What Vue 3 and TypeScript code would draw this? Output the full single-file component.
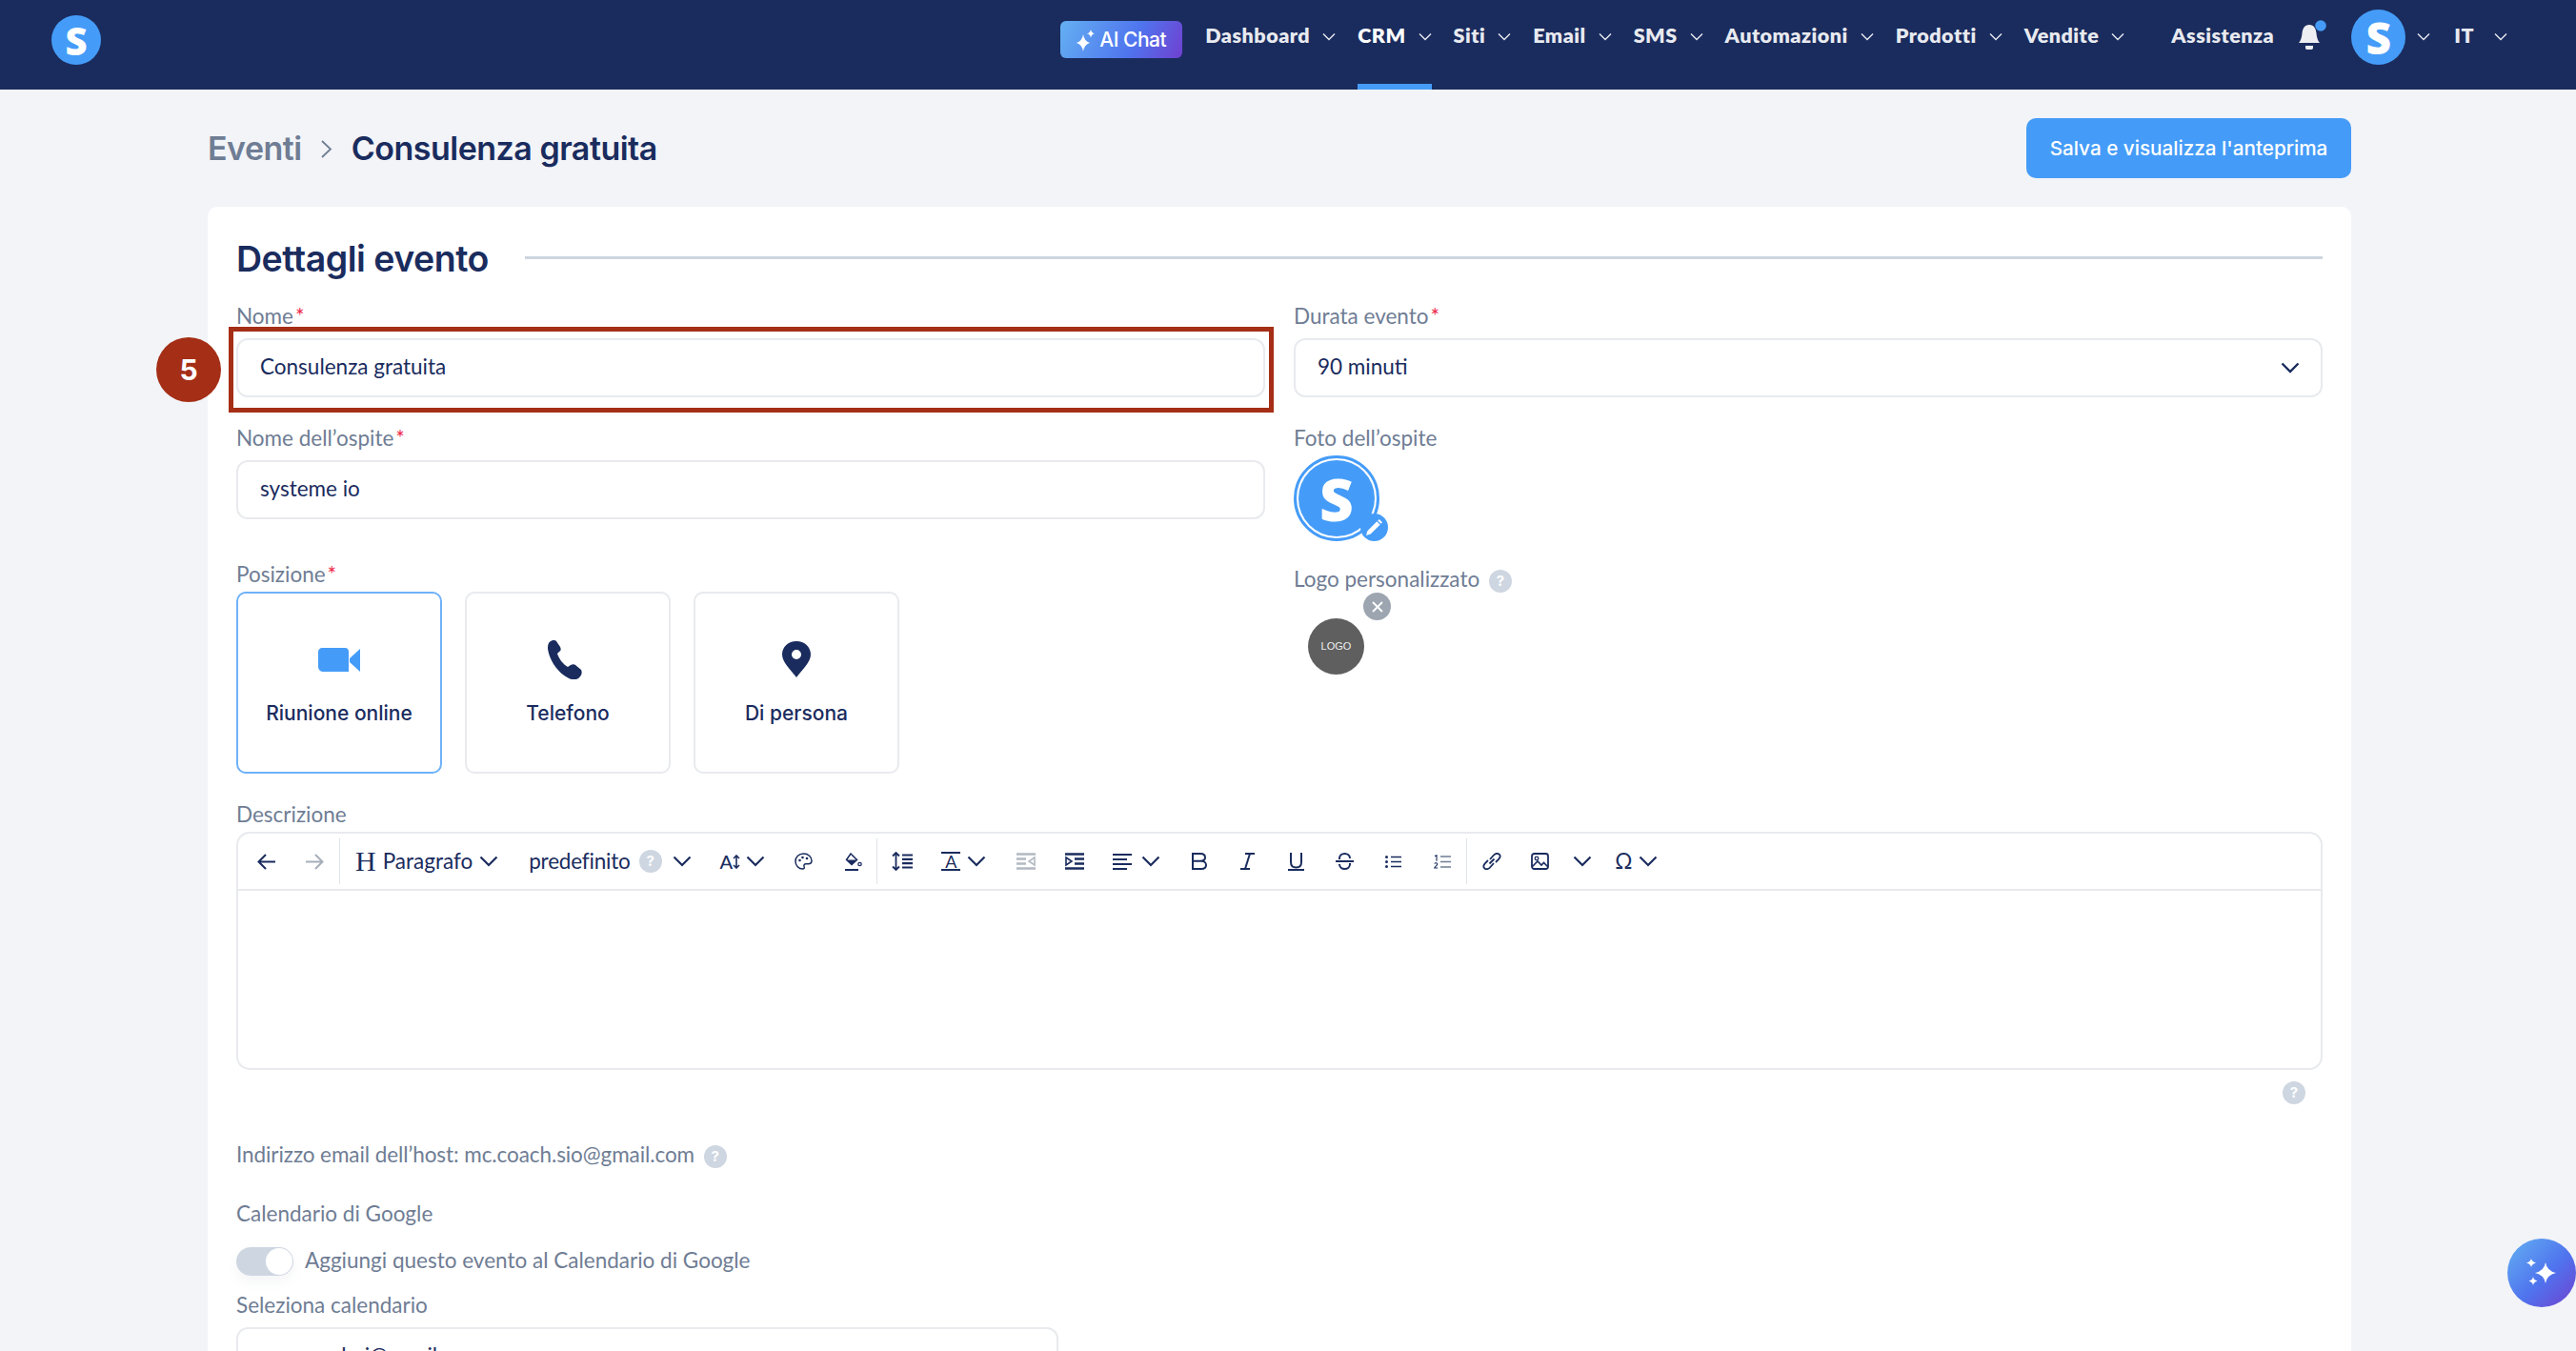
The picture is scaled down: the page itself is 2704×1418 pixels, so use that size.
<script setup lang="ts">
type NavItem = { label: string; active?: boolean }

const navItems: NavItem[] = [
  { label: 'Dashboard' },
  { label: 'CRM', active: true },
  { label: 'Siti' },
  { label: 'Email' },
  { label: 'SMS' },
  { label: 'Automazioni' },
  { label: 'Prodotti' },
  { label: 'Vendite' }
]
</script>

<template>
  <div class="page">
    <header class="topbar">
      <div class="logo"><span>S</span></div>
      <nav class="nav">
        <button class="ai-chat">
          <svg width="20" height="24" viewBox="0 0 20 24"><path fill="#fff" d="M7 6Q8 13 14 15 8 17 7 24 6 17 0 15 6 13 7 6zM15 1Q15.600 4.400 19 5.300 15.600 6.200 15 9.500 14.400 6.200 11 5.300 14.400 4.400 15 1z"/></svg>
          AI Chat
        </button>
        <a v-for="item in navItems" :key="item.label" class="nav-item" :class="{ active: item.active }">
          <span>{{ item.label }}</span>
          <svg class="nav-chev" width="14" height="9" viewBox="0 0 14 9"><path d="M1 1.500l6 6 6-6" fill="none" stroke="#e8eaf0" stroke-width="1.400"/></svg>
        </a>
        <a class="nav-item help-link"><span>Assistenza</span></a>
        <div class="bell">
          <svg width="30" height="34" viewBox="0 0 30 34"><path fill="#eceef2" d="M12 6c-5 0-7 4-7.500 9-.3 4-1.500 8-3.500 10h22c-2-2-3.200-6-3.500-10-.5-5-2.500-9-7.500-9zM8 28h8v2c0 1-.6 2-1.600 2H9.600C8.600 32 8 31 8 30z"/><circle cx="24" cy="7" r="5.800" fill="#459cf8"/></svg>
        </div>
        <div class="avatar"><span>S</span></div>
        <svg class="nav-chev avatar-chev" width="14" height="9" viewBox="0 0 14 9"><path d="M1 1.500l6 6 6-6" fill="none" stroke="#e8eaf0" stroke-width="1.400"/></svg>
        <a class="nav-item lang"><span>IT</span>
          <svg class="nav-chev" width="14" height="9" viewBox="0 0 14 9"><path d="M1 1.500l6 6 6-6" fill="none" stroke="#e8eaf0" stroke-width="1.400"/></svg>
        </a>
      </nav>
    </header>

    <main class="content">
      <div class="page-head">
        <div class="crumbs">
          <span class="crumb-parent">Eventi</span>
          <svg width="14" height="24" viewBox="0 0 14 24"><path d="M2 4l9 8.500-9 8.500" fill="none" stroke="#6f7d94" stroke-width="1.800"/></svg>
          <span class="crumb-current">Consulenza gratuita</span>
        </div>
        <button class="primary">Salva e visualizza l'anteprima</button>
      </div>

      <section class="card">
        <div class="section-title">
          <h2>Dettagli evento</h2>
          <div class="rule"></div>
        </div>

        <div class="columns">
          <div class="col">
            <div class="field field-name">
              <label>Nome<i>*</i></label>
              <div class="input">Consulenza gratuita</div>
              <div class="highlight"></div>
              <div class="step">5</div>
            </div>
            <div class="field">
              <label>Nome dell’ospite<i>*</i></label>
              <div class="input">systeme io</div>
            </div>
            <div class="field field-pos">
              <label>Posizione<i>*</i></label>
              <div class="pos-row">
                <div class="pos selected">
                  <span class="pos-icon"><svg width="44" height="25" viewBox="0 0 44 25"><path fill="#459cf8" d="M4 0h24c3 0 4 2 4 4v21H6c-4 0-6-2-6-6V4c0-2 2-4 4-4zM33 11L44 1v24L33 15z"/></svg></span>
                  <span>Riunione online</span>
                </div>
                <div class="pos">
                  <span class="pos-icon"><svg width="42" height="41" viewBox="0 0 42 41"><path fill="#1a2c5e" d="M1 3c2-3 6-4 8-2l4 6c1 2 1 4-1 5l-2 2c2 6 6 11 11 14l3-2c2-1 4-1 5 0l6 5c1 2 1 5-1 7-2 3-6 4-9 3C13 37 2 23 0 9c0-2 0-4 1-6z"/></svg></span>
                  <span>Telefono</span>
                </div>
                <div class="pos">
                  <span class="pos-icon"><svg width="30" height="38" viewBox="0 0 30 38"><path fill="#1a2c5e" fill-rule="evenodd" d="M15 0c8.500 0 15 6 15 14 0 8-9 16-15 24C9 30 0 22 0 14 0 6 6.500 0 15 0zm0 9a5 5 0 1 0 0 10 5 5 0 0 0 0-10z"/></svg></span>
                  <span>Di persona</span>
                </div>
              </div>
            </div>
          </div>

          <div class="col">
            <div class="field">
              <label>Durata evento<i>*</i></label>
              <div class="input select">
                90 minuti
                <svg width="20" height="12" viewBox="0 0 20 12"><path d="M1.500 1.500L10 10l8.500-8.500" fill="none" stroke="#1a2c5e" stroke-width="2.400"/></svg>
              </div>
            </div>
            <div class="field">
              <label>Foto dell’ospite</label>
              <div class="guest-photo">
                <div class="guest-inner"><span>S</span></div>
                <div class="pencil">
                  <svg width="18" height="18" viewBox="0 0 18 18"><path fill="#fff" d="M0 18l1.500-5L12 2.500l3.500 3.500L5 16.500zM13 1.500L14.500 0 18 3.500 16.500 5z"/></svg>
                </div>
              </div>
            </div>
            <div class="field field-logo">
              <label>Logo personalizzato <span class="help">?</span></label>
              <div class="logo-box">
                <div class="logo-round">LOGO</div>
                <div class="remove">
                  <svg width="12" height="12" viewBox="0 0 12 12"><path d="M1 1l10 10M11 1L1 11" stroke="#fff" stroke-width="1.800"/></svg>
                </div>
              </div>
            </div>
          </div>
        </div>

        <div class="field field-desc">
          <label>Descrizione</label>
          <div class="editor">
            <div class="toolbar">
              <span class="tool">
                <svg width="19" height="17" viewBox="0 0 19 17"><path d="M19 8.500H2M9 1L1.500 8.500 9 16" fill="none" stroke="#1a2c5e" stroke-width="2"/></svg>
              </span>
              <span class="tool">
                <svg width="19" height="17" viewBox="0 0 19 17"><path d="M0 8.500h17M10 1l7.500 7.500L10 16" fill="none" stroke="#a6afba" stroke-width="2"/></svg>
              </span>
              <span class="sep"></span>
              <span class="tool wide heading">
                <span class="h-mark">H</span>
                <span class="tool-text">Paragrafo</span>
                <svg class="chev" width="20" height="12" viewBox="0 0 20 12"><path d="M1.500 1.500L10 10l8.500-8.500" fill="none" stroke="#1a2c5e" stroke-width="2.200"/></svg>
              </span>
              <span class="tool wide font">
                <span class="tool-text">predefinito</span>
                <span class="help">?</span>
                <svg class="chev" width="20" height="12" viewBox="0 0 20 12"><path d="M1.500 1.500L10 10l8.500-8.500" fill="none" stroke="#1a2c5e" stroke-width="2.200"/></svg>
              </span>
              <span class="tool wide size">
                <span class="size-a">A</span>
                <svg width="8" height="15" viewBox="0 0 8 15"><path d="M4 1v13M1 4l3-3 3 3M1 11l3 3 3-3" fill="none" stroke="#1a2c5e" stroke-width="1.600"/></svg>
                <svg class="chev" width="20" height="12" viewBox="0 0 20 12"><path d="M1.500 1.500L10 10l8.500-8.500" fill="none" stroke="#1a2c5e" stroke-width="2.200"/></svg>
              </span>
              <span class="tool">
                <svg width="19" height="18" viewBox="0 0 19 18"><path d="M9.500 1C4.500 1 1 4.500 1 9s3.500 8 7.500 8c1.800 0 2.200-1.300 1.600-2.500-.7-1.500.2-2.800 1.800-2.800h2.600c1.800 0 3.500-1.200 3.500-3.200C18 4.500 14.500 1 9.500 1z" fill="none" stroke="#1a2c5e" stroke-width="1.500"/><circle cx="5.500" cy="8" r="1.300" fill="#1a2c5e"/><circle cx="8.500" cy="5" r="1.300" fill="#1a2c5e"/><circle cx="13" cy="6" r="1.300" fill="#1a2c5e"/></svg>
              </span>
              <span class="tool">
                <svg width="20" height="19" viewBox="0 0 20 19"><path d="M8 1l6.500 6.500-5.500 5-5.500-5z" fill="none" stroke="#1a2c5e" stroke-width="1.500"/><path d="M3.500 7.500h11l-5.500 5z" fill="#1a2c5e"/><path d="M2 18h14" stroke="#1a2c5e" stroke-width="2"/><circle cx="17.500" cy="12" r="1.700" fill="none" stroke="#1a2c5e" stroke-width="1.300"/></svg>
              </span>
              <span class="sep"></span>
              <span class="tool">
                <svg width="22" height="20" viewBox="0 0 22 20"><path d="M4.500 1v18M1 4.500L4.500 1 8 4.500M1 15.500L4.500 19 8 15.500" fill="none" stroke="#1a2c5e" stroke-width="1.800"/><path d="M11 3.500h11M11 7.800h11M11 12.200h11M11 16.500h11" stroke="#1a2c5e" stroke-width="2.200"/></svg>
              </span>
              <span class="tool wide color">
                <span class="a-under">A</span>
                <svg class="chev" width="20" height="12" viewBox="0 0 20 12"><path d="M1.500 1.500L10 10l8.500-8.500" fill="none" stroke="#1a2c5e" stroke-width="2.200"/></svg>
              </span>
              <span class="tool">
                <svg width="20" height="18" viewBox="0 0 20 18"><path d="M0 1.500h20M0 16.500h20M0 6.500h10M0 11.500h10" stroke="#b2b9c2" stroke-width="2.400"/><path d="M19 5l-6 4 6 4z" fill="none" stroke="#b2b9c2" stroke-width="1.600"/></svg>
              </span>
              <span class="tool">
                <svg width="20" height="18" viewBox="0 0 20 18"><path d="M0 1.500h20M0 16.500h20M10 6.500h10M10 11.500h10" stroke="#1a2c5e" stroke-width="2.400"/><path d="M1 5l6 4-6 4z" fill="none" stroke="#1a2c5e" stroke-width="1.600"/></svg>
              </span>
              <span class="tool wide align">
                <svg width="20" height="18" viewBox="0 0 20 18"><path d="M0 2h20M0 7h15M0 12h20M0 17h15" stroke="#1a2c5e" stroke-width="2"/></svg>
                <svg class="chev" width="20" height="12" viewBox="0 0 20 12"><path d="M1.500 1.500L10 10l8.500-8.500" fill="none" stroke="#1a2c5e" stroke-width="2.200"/></svg>
              </span>
              <span class="tool">
                <svg width="16" height="18" viewBox="0 0 16 18"><path d="M1 1h8c3 0 5 1.600 5 4s-2 3.800-5 3.800H1zM1 8.800h9c3 0 5 1.800 5 4.200s-2 4-5 4H1z" fill="none" stroke="#1a2c5e" stroke-width="2"/></svg>
              </span>
              <span class="tool">
                <svg width="15" height="18" viewBox="0 0 15 18"><path d="M5 1h10M0 17h10M10 1L5 17" fill="none" stroke="#1a2c5e" stroke-width="2"/></svg>
              </span>
              <span class="tool">
                <svg width="17" height="19" viewBox="0 0 17 19"><path d="M3 0v10c0 3.500 2.200 5.500 5.500 5.500S14 13.500 14 10V0M0 18h17" fill="none" stroke="#1a2c5e" stroke-width="2"/></svg>
              </span>
              <span class="tool">
                <svg width="19" height="18" viewBox="0 0 19 18"><path d="M0 9h19" stroke="#1a2c5e" stroke-width="2"/><path d="M15 6c0-3-2.500-5-5.500-5S4 3 4 6v1M4 12c0 3 2.500 5 5.500 5s5.500-2 5.500-5v-1" fill="none" stroke="#1a2c5e" stroke-width="2"/></svg>
              </span>
              <span class="tool">
                <svg width="17" height="13" viewBox="0 0 17 13"><circle cx="1.500" cy="1.500" r="1.500" fill="#1a2c5e"/><circle cx="1.500" cy="6.500" r="1.500" fill="#1a2c5e"/><circle cx="1.500" cy="11.500" r="1.500" fill="#1a2c5e"/><path d="M6 1.500h11M6 6.500h11M6 11.500h11" stroke="#1a2c5e" stroke-width="1.600"/></svg>
              </span>
              <span class="tool">
                <svg width="18" height="15" viewBox="0 0 18 15"><path d="M1 1.500L3 .8v6M.8 9.500c.5-1 3-1 3 .5 0 1.200-2.600 2.500-3 4h3.400" fill="none" stroke="#1a2c5e" stroke-width="1.100"/><path d="M7 2h11M7 7.500h11M7 13h11" stroke="#6f7d94" stroke-width="1.600"/></svg>
              </span>
              <span class="sep"></span>
              <span class="tool">
                <svg width="20" height="18" viewBox="0 0 20 18"><path d="M8 7l4-4.500c1.800-2 4.300-2.200 5.700-.8 1.300 1.300 1 3.400-.4 5L14 10M12 11l-4 4.500c-1.800 2-4.300 2.200-5.700.8-1.300-1.300-1-3.400.4-5L6 8M7.500 11.500l5-5" fill="none" stroke="#1a2c5e" stroke-width="1.800"/></svg>
              </span>
              <span class="tool">
                <svg width="19" height="18" viewBox="0 0 19 18"><rect x="1" y="1" width="17" height="16" rx="2.500" fill="none" stroke="#1a2c5e" stroke-width="1.800"/><circle cx="6" cy="6" r="1.800" fill="none" stroke="#1a2c5e" stroke-width="1.300"/><path d="M1 15l6-6 4 4 2.500-2.500L18 15" fill="none" stroke="#1a2c5e" stroke-width="1.600"/></svg>
              </span>
              <span class="tool narrow">
                <svg width="20" height="12" viewBox="0 0 20 12"><path d="M1.500 1.500L10 10l8.500-8.500" fill="none" stroke="#1a2c5e" stroke-width="2.200"/></svg>
              </span>
              <span class="tool wide omega">
                <span class="tool-text">Ω</span>
                <svg class="chev" width="20" height="12" viewBox="0 0 20 12"><path d="M1.500 1.500L10 10l8.500-8.500" fill="none" stroke="#1a2c5e" stroke-width="2.200"/></svg>
              </span>
            </div>
            <div class="editor-body"></div>
          </div>
          <div class="editor-foot"><span class="help">?</span></div>
        </div>

        <div class="plain host">Indirizzo email dell’host: mc.coach.sio@gmail.com <span class="help">?</span></div>
        <div class="plain google">Calendario di Google</div>
        <div class="switch-row">
          <span class="switch"><span class="knob"></span></span>
          <span class="plain switch-label">Aggiungi questo evento al Calendario di Google</span>
        </div>
        <div class="field field-cal">
          <label>Seleziona calendario</label>
          <div class="input cal-input">maroncelari@gmail.com</div>
        </div>
      </section>
    </main>

    <button class="fab">
      <svg width="34" height="32" viewBox="0 0 34 32"><path fill="#fff" d="M21 5Q22.500 14 32 16 22.500 18 21 27 19.500 18 10 16 19.500 14 21 5zM6 1Q6.600 4.400 11 5.500 6.600 6.600 6 10 5.400 6.600 1 5.500 5.400 4.400 6 1zM8 20Q8.500 23.500 12.500 24.500 8.500 25.500 8 29 7.500 25.500 3.500 24.500 7.500 23.500 8 20z"/></svg>
    </button>
  </div>
</template>

<style>
html, body {
  margin: 0;
  background: #f2f4f8;
}
</style>

<style scoped>
.page {
  height: 1418px;
  overflow: hidden;
  position: relative;
  font-family: "Lato", "Liberation Sans", sans-serif;
  color: #1a2c5e;
}
.topbar {
  height: 94px;
  background: #1a2c5e;
  display: flex;
  justify-content: space-between;
  padding-left: 54px;
  box-sizing: border-box;
}
.logo, .avatar {
  border-radius: 50%;
  background: #459cf8;
  color: #fff;
  font-family: "Open Sans", sans-serif;
  font-weight: 800;
  display: flex;
  align-items: center;
  justify-content: center;
}
.logo {
  width: 52px;
  height: 52px;
  margin-top: 16px;
  font-size: 40px;
}
.nav {
  display: flex;
  align-items: flex-start;
  padding-right: 72px;
}
.ai-chat {
  width: 128px;
  height: 39px;
  margin-top: 22px;
  margin-right: 24px;
  border: 0;
  border-radius: 6px;
  background: linear-gradient(115deg, #64b0f2 0%, #4f74ee 60%, #7040d0 100%);
  color: #fff;
  font: 500 21px "Inter", sans-serif;
  letter-spacing: -0.5px;
  display: flex;
  align-items: center;
  justify-content: center;
  gap: 4px;
  padding: 0;
}
.nav-item {
  height: 94px;
  box-sizing: border-box;
  padding-top: 22px;
  margin-right: 23px;
  color: #e8eaf0;
  font-size: 21.5px;
  font-weight: 800;
  line-height: 30px;
  letter-spacing: 0.5px;
  display: flex;
  align-items: flex-start;
  gap: 13px;
}
.nav-item.active {
  color: #fff;
  border-bottom: 6px solid #459cf8;
}
.nav-chev {
  margin-top: 12px;
  flex: none;
}
.help-link {
  margin-left: 26px;
  margin-right: 25px;
}
.bell {
  margin-top: 20px;
  margin-right: 26px;
  width: 30px;
}
.avatar {
  width: 57px;
  height: 58px;
  margin-top: 10px;
  font-size: 46px;
}
.avatar-chev {
  margin: 34px 25px 0 12px;
}
.lang {
  margin-right: 0;
  gap: 21px;
}
.content {
  padding: 30px 236px 0 218px;
}
.page-head {
  display: flex;
  justify-content: space-between;
  align-items: center;
  height: 63px;
}
.crumbs {
  display: flex;
  align-items: center;
  gap: 19px;
  font-family: "Inter", sans-serif;
  font-size: 34px;
  font-weight: 600;
  letter-spacing: -0.5px;
}
.crumb-parent {
  color: #6f7d94;
}
.primary {
  width: 341px;
  height: 63px;
  border: 0;
  border-radius: 10px;
  background: #459cf8;
  color: #fff;
  font: 500 20.7px "Inter", sans-serif;
}
.card {
  margin-top: 30px;
  height: 1300px;
  background: #fff;
  border-radius: 10px 10px 0 0;
  padding: 31px 30px 0;
  box-sizing: border-box;
}
.section-title {
  display: flex;
  align-items: center;
  gap: 38px;
  height: 46px;
}
h2 {
  margin: 0;
  font-family: "Inter", sans-serif;
  font-size: 37.5px;
  font-weight: 600;
  letter-spacing: -0.5px;
}
.rule {
  flex: 1;
  height: 3px;
  background: #cdd5e0;
  margin-top: -2px;
}
.columns {
  display: grid;
  grid-template-columns: 1080px 1080px;
  column-gap: 30px;
  margin-top: 26px;
}
.col {
  display: flex;
  flex-direction: column;
}
.field {
  position: relative;
}
label {
  display: block;
  height: 24px;
  line-height: 24px;
  font-size: 22.5px;
  color: #6f7d94;
}
label i {
  color: #ee2b4d;
  font-style: normal;
  margin-left: 2px;
}
.input {
  margin-top: 11px;
  height: 62px;
  box-sizing: border-box;
  border: 2px solid #e8eaee;
  border-radius: 12px;
  padding: 0 23px 4px;
  display: flex;
  align-items: center;
  font-size: 22.5px;
  background: #fff;
}
.field + .field {
  margin-top: 31px;
}
.select {
  justify-content: space-between;
  padding-right: 22px;
}
.select svg {
  margin-top: 4px;
}
.highlight {
  position: absolute;
  left: -8px;
  right: -9px;
  top: 23px;
  height: 90px;
  box-sizing: border-box;
  border: 5px solid #a52e16;
  pointer-events: none;
}
.step {
  position: absolute;
  left: -84px;
  top: 34px;
  width: 68px;
  height: 68px;
  border-radius: 50%;
  background: #a52e16;
  color: #fff;
  font: 700 30px/68px "Inter", sans-serif;
  text-align: center;
}
.field-pos {
  margin-top: 46px !important;
}
.pos-row {
  display: flex;
  gap: 24px;
  margin-top: 6px;
}
.pos {
  width: 216px;
  height: 191px;
  box-sizing: border-box;
  border: 2px solid #e8eaee;
  border-radius: 10px;
  padding-top: 48px;
  display: flex;
  flex-direction: column;
  align-items: center;
  gap: 21px;
  font: 500 21px/30px "Inter", sans-serif;
}
.pos-icon {
  height: 42px;
  display: flex;
  align-items: center;
  justify-content: center;
}
.pos.selected {
  border-color: #6fb1f9;
}
.guest-photo {
  position: relative;
  width: 90px;
  height: 90px;
  margin-top: 6px;
  border-radius: 50%;
  border: 3px solid #459cf8;
  box-sizing: border-box;
  padding: 2px;
}
.guest-inner {
  width: 100%;
  height: 100%;
  border-radius: 50%;
  background: #459cf8;
  color: #fff;
  font: 800 62px/1 "Open Sans", sans-serif;
  display: flex;
  align-items: center;
  justify-content: center;
}
.pencil {
  position: absolute;
  right: -12px;
  bottom: -3px;
  width: 29px;
  height: 29px;
  border-radius: 50%;
  background: #459cf8;
  display: flex;
  align-items: center;
  justify-content: center;
}
.pencil svg {
  width: 17px;
  height: 17px;
}
.field-logo {
  margin-top: 28px !important;
}
.logo-box {
  position: relative;
  width: 90px;
  margin-left: 15px;
  margin-top: 29px;
}
.logo-round {
  width: 59px;
  height: 59px;
  border-radius: 50%;
  background: #5f5f5f;
  color: #f0f0f0;
  font: 11px/59px "Liberation Sans", sans-serif;
  text-align: center;
}
.remove {
  position: absolute;
  left: 58px;
  top: -27px;
  width: 29px;
  height: 29px;
  border-radius: 50%;
  background: #9ca5b0;
  display: flex;
  align-items: center;
  justify-content: center;
}
.help {
  display: inline-flex;
  width: 24px;
  height: 24px;
  border-radius: 50%;
  background: #ced6e1;
  color: #fff;
  font: 700 15px/24px "Inter", sans-serif;
  align-items: center;
  justify-content: center;
  vertical-align: middle;
}
label .help {
  margin-left: 4px;
}
.field-desc {
  margin-top: 31px;
}
.editor {
  border: 2px solid #e8eaee;
  border-radius: 14px;
  height: 250px;
  box-sizing: border-box;
  margin-top: 6px;
}
.toolbar {
  height: 60px;
  box-sizing: border-box;
  border-bottom: 2px solid #e8eaee;
  display: flex;
  align-items: center;
  padding-left: 4px;
}
.tool {
  flex: none;
  width: 51px;
  display: flex;
  align-items: center;
  justify-content: center;
  gap: 7px;
}
.tool.wide {
  width: auto;
  padding: 0 16px;
}
.tool.narrow {
  width: 38px;
}
.tool-text {
  font-size: 22.5px;
  line-height: 28px;
}
.h-mark {
  font: 30px/28px "Liberation Serif", serif;
}
.font {
  gap: 9px;
}
.font .tool-text {
  letter-spacing: -0.2px;
}
.font .chev {
  margin-left: 2px;
}
.size {
  gap: 0;
  padding: 0 15px 0 14px !important;
}
.size-a {
  font-size: 20px;
  font-weight: 500;
  line-height: 24px;
}
.size .chev {
  margin-left: 6px;
}
.a-under {
  width: 20px;
  text-align: center;
  border-top: 2px solid #1a2c5e;
  border-bottom: 2px solid #1a2c5e;
  font-size: 18px;
  line-height: 16px;
}
.align {
  gap: 10px;
  padding: 0 15px !important;
}
.omega {
  padding: 0 15px !important;
}
.sep {
  flex: none;
  width: 1px;
  height: 48px;
  background: #e0e3e8;
}
.editor-foot {
  display: flex;
  justify-content: flex-end;
  padding: 12px 18px 0 0;
}
.plain {
  font-size: 22.5px;
  color: #6f7d94;
}
.host {
  margin-top: 38px;
  height: 30px;
  line-height: 30px;
  letter-spacing: -0.08px;
}
.host .help {
  margin-left: 4px;
}
.google {
  margin-top: 32px;
  height: 30px;
  line-height: 30px;
}
.switch-row {
  margin-top: 20px;
  display: flex;
  align-items: center;
  gap: 12px;
  height: 30px;
}
.switch-label {
  margin-top: -4px;
}
.switch {
  width: 60px;
  height: 30px;
  border-radius: 15px;
  background: #ced6e1;
  position: relative;
  box-shadow: 0 6px 12px rgba(120, 130, 150, 0.08);
}
.knob {
  position: absolute;
  right: 1px;
  top: 1px;
  width: 28px;
  height: 28px;
  border-radius: 50%;
  background: #fff;
}
.field-cal {
  margin-top: 19px !important;
}
.cal-input {
  width: 863px;
}
.fab {
  position: absolute;
  left: 2632px;
  top: 1300px;
  width: 72px;
  height: 72px;
  padding: 0;
  border: 0;
  border-radius: 50%;
  background: linear-gradient(135deg, #64b0f2 0%, #4f74ee 55%, #7040d0 100%);
  display: flex;
  align-items: center;
  justify-content: center;
}
</style>
